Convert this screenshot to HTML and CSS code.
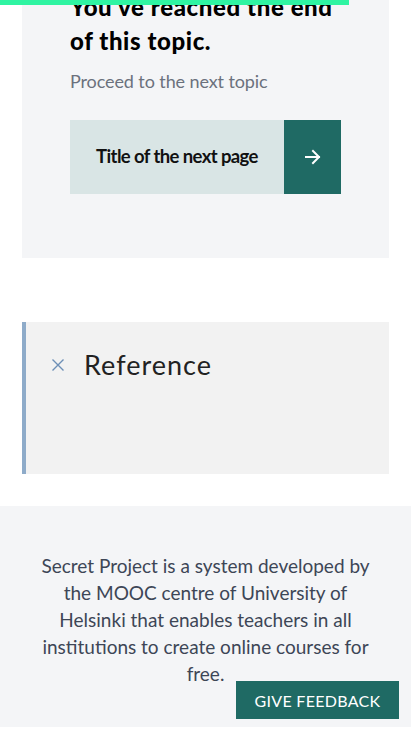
FILE: index.html
```html
<!DOCTYPE html>
<html lang="en">
<head>
<meta charset="utf-8">
<title>End of topic</title>
<link rel="stylesheet" href="styles.css">
</head>
<body>
<div class="progress"></div>
<main class="main">
  <section class="end-card">
    <h2 class="end-title">You've reached the end of this topic.</h2>
    <p class="end-sub">Proceed to the next topic</p>
    <a class="next-btn" href="#">
      <span class="next-label">Title of the next page</span>
      <span class="next-arrow">
        <svg width="16" height="16" viewBox="0 0 16 16" fill="none" stroke="#fff" stroke-width="2" stroke-linecap="square"><path d="M1 8h13M8 2l6 6-6 6"/></svg>
      </span>
    </a>
  </section>
  <section class="ref-box">
    <div class="ref-head">
      <svg class="ref-x" width="14" height="14" viewBox="0 0 14 14" stroke="#6d8fb6" stroke-width="1.4" fill="none"><path d="M1.5 1.5l11 11M12.5 1.5l-11 11"/></svg>
      <h3 class="ref-title">Reference</h3>
    </div>
  </section>
</main>
<footer class="footer">
  <p class="footer-text">Secret Project is a system developed by the MOOC centre of University of Helsinki that enables teachers in all institutions to create online courses for free.</p>
</footer>
<a class="feedback" href="#">GIVE FEEDBACK</a>
</body>
</html>
```
FILE: styles.css
```css
html, body { margin: 0; padding: 0; }
body { background: #fff; font-family: Lato, "Liberation Sans", sans-serif; overflow-x: hidden; }
.progress { position: fixed; top: 0; left: 0; width: 349px; height: 5px; background: #2ff4a2; z-index: 10; }
.main { display: flex; flex-direction: column; }
.end-card { margin: -10px 22px 0; background: #f4f5f7; padding: 0 48px 64px; display: flex; flex-direction: column; }
.end-title { margin: 0; font-family: Lato, sans-serif; font-weight: 900; font-size: 24px; line-height: 34px; color: #000; letter-spacing: 0.6px; }
.end-sub { margin: 10px 0 0; font-size: 18px; line-height: 27px; color: #6b717d; letter-spacing: -0.1px; }
.next-btn { margin-top: 25px; display: flex; height: 74px; text-decoration: none; }
.next-label { width: 214px; background: #d9e5e5; display: flex; align-items: center; justify-content: center; padding-bottom: 3px; box-sizing: border-box; font-weight: 700; font-size: 18.5px; color: #111; letter-spacing: -0.6px; }
.next-arrow { width: 57px; background: #1f6a64; display: flex; align-items: center; justify-content: center; }
.ref-box { margin: 64px 22px 0; height: 152px; box-sizing: border-box; background: #f2f2f2; border-left: 4px solid #8eabc9; padding: 27px 0 0 25px; }
.ref-head { display: flex; align-items: center; gap: 19px; }
.ref-x { flex: none; }
.ref-title { margin: 0; font-weight: 400; font-size: 27px; line-height: 32px; color: #222; letter-spacing: 1px; }
.footer { margin-top: 32px; background: #f4f5f7; padding: 46px 38px 40px; }
.footer-text { margin: 0; text-align: center; font-size: 19px; line-height: 27px; color: #3d4656; }
.feedback { position: fixed; right: 12px; bottom: 12px; width: 163px; height: 38px; background: #1f6a64; color: #fff; display: flex; align-items: center; justify-content: center; font-size: 16px; text-decoration: none; letter-spacing: 0.3px; }
```
